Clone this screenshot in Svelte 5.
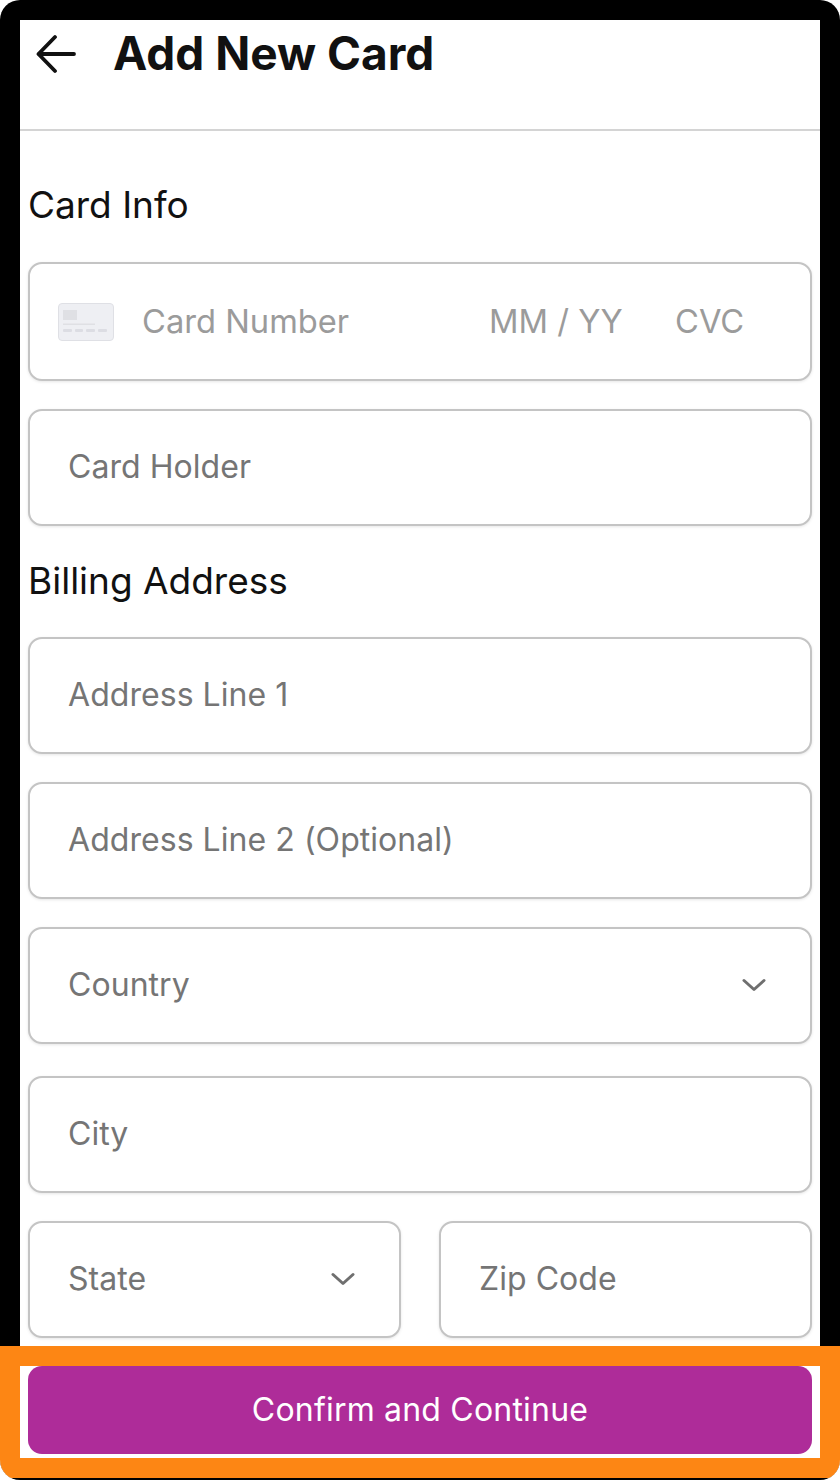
<script>
	const cardFields = ["Card Holder"];
	const addressFields = [
		{ label: "Address Line 1" },
		{ label: "Address Line 2 (Optional)" },
		{ label: "Country", select: true, gap: true },
		{ label: "City" },
	];
</script>

{#snippet chevron()}
	<svg class="chevron" viewBox="0 0 24 14" width="24" height="14" fill="none" aria-hidden="true">
		<path d="M2 2.5 12 11.5 22 2.5" stroke="#6f6f6f" stroke-width="3" stroke-linecap="round" stroke-linejoin="round" />
	</svg>
{/snippet}

<div class="frame">
	<div class="screen">
		<header class="header">
			<button class="back" aria-label="Back">
				<svg viewBox="0 0 40 40" width="40" height="40" fill="none">
					<path d="M38 20H2.5M19 3 2.5 20 19 37" stroke="#111" stroke-width="3.8" stroke-linecap="round" stroke-linejoin="round" />
				</svg>
			</button>
			<h1>Add New Card</h1>
		</header>

		<main class="form">
			<h2 class="card-title">Card Info</h2>
			<div class="field card-field">
				<svg class="card-icon" viewBox="0 0 56 38" width="56" height="38" aria-hidden="true">
					<rect x="0.5" y="0.5" width="55" height="37" rx="3.5" fill="#eeeff3" stroke="#dfe0e5" />
					<rect x="5" y="7" width="14" height="10" fill="#dfe0e4" />
					<rect x="5" y="20.5" width="32" height="1.5" fill="#dfe0e4" />
					<rect x="5" y="26" width="9" height="3" rx="1" fill="#dcdde3" />
					<rect x="17" y="26" width="8" height="3" rx="1" fill="#dcdde3" />
					<rect x="28" y="26" width="9" height="3" rx="1" fill="#dcdde3" />
					<rect x="40" y="26" width="9" height="3" rx="1" fill="#dcdde3" />
				</svg>
				<span class="soft number">Card Number</span>
				<span class="soft expiry">MM / YY</span>
				<span class="soft">CVC</span>
			</div>
			{#each cardFields as label}
				<div class="field">{label}</div>
			{/each}

			<h2 class="billing-title">Billing Address</h2>
			<div class="stack">
				{#each addressFields as item}
					<div class="field" class:wide-gap={item.gap}>
						<span>{item.label}</span>
						{#if item.select}
							{@render chevron()}
						{/if}
					</div>
				{/each}
				<div class="row">
					<div class="field">
						<span>State</span>
						{@render chevron()}
					</div>
					<div class="field">Zip Code</div>
				</div>
			</div>
		</main>
	</div>

	<footer class="footer">
		<button class="confirm">Confirm and Continue</button>
	</footer>
</div>

<style>
	:global(body) {
		margin: 0;
		background: #fff;
	}

	.frame {
		width: 840px;
		height: 1480px;
		display: flex;
		flex-direction: column;
		background: #000;
		border-radius: 20px;
		overflow: hidden;
		font-family: Inter, "Liberation Sans", sans-serif;
		box-sizing: border-box;
		padding-bottom: 2px;
	}

	.screen {
		flex: 1;
		min-height: 0;
		margin: 20px 20px 0;
		background: #fff;
		overflow: hidden;
	}

	.header {
		height: 109px;
		display: flex;
		align-items: flex-start;
		border-bottom: 2px solid #d4d4d4;
	}

	.back {
		width: 40px;
		height: 40px;
		margin: 14px 0 0 16px;
		padding: 0;
		border: none;
		background: transparent;
	}

	.header h1 {
		margin: 4px 0 0 37px;
		font-size: 46px;
		line-height: 58px;
		font-weight: 700;
		color: #111;
	}

	.form {
		padding: 0 8px;
	}

	h2 {
		margin: 0;
		font-size: 37px;
		line-height: 44px;
		font-weight: 400;
		color: #111;
	}

	.card-title {
		padding-top: 52px;
		padding-bottom: 35px;
	}

	.billing-title {
		padding-top: 33px;
		padding-bottom: 35px;
	}

	.field {
		box-sizing: border-box;
		height: 117px;
		display: flex;
		align-items: center;
		justify-content: space-between;
		padding: 0 38px 2px;
		border: 2px solid #c4c4c4;
		border-radius: 14px;
		background: #fff;
		box-shadow: 0 1px 3px rgba(0, 0, 0, 0.1);
		font-size: 32px;
		letter-spacing: 0.05px;
		color: #757575;
	}

	.card-field {
		height: 119px;
		margin-bottom: 28px;
		justify-content: flex-start;
		padding: 0 0 1px 28px;
		font-size: 32.7px;
		letter-spacing: 0;
		color: #9b9b9b;
	}

	.card-icon {
		flex: none;
		margin-right: 28px;
		position: relative;
		top: 1px;
	}

	.number {
		width: 347px;
	}

	.expiry {
		width: 186px;
	}

	.stack {
		display: flex;
		flex-direction: column;
		gap: 28px;
	}

	.stack > .field:first-child {
		margin-top: -1px;
	}

	.wide-gap {
		margin-bottom: 4px;
	}

	.row {
		display: grid;
		grid-template-columns: 1fr 1fr;
		gap: 38px;
	}

	.chevron {
		flex: none;
		margin-right: 6px;
	}

	.footer {
		box-sizing: border-box;
		flex: none;
		height: 132px;
		border: 20px solid #fd8614;
		background: #fff;
		padding: 0 8px 4px;
	}

	.confirm {
		display: block;
		width: 100%;
		height: 88px;
		padding: 0 0 2px;
		border: none;
		border-radius: 14px;
		background: #ae2c99;
		color: #fff;
		font-family: inherit;
		font-size: 32px;
		letter-spacing: 0.2px;
	}
</style>
